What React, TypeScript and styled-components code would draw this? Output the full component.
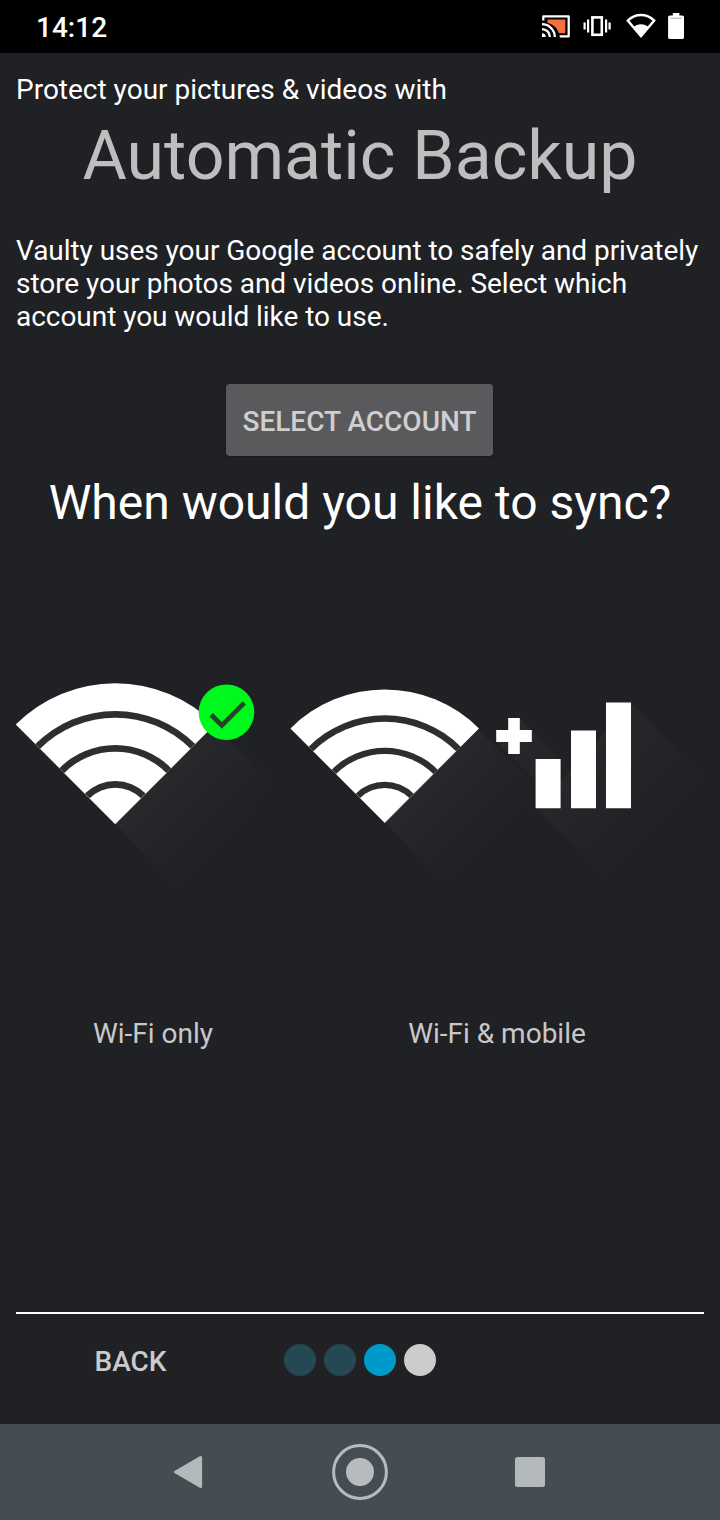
import React from "react";
import styled, { createGlobalStyle } from "styled-components";

const GlobalStyle = createGlobalStyle`
  *, *::before, *::after { box-sizing: border-box; }
  body { margin: 0; background: #202125; }
`;

const Screen = styled.div`
  width: 720px;
  height: 1520px;
  display: flex;
  flex-direction: column;
  overflow: hidden;
  background: #202125;
  color: #fff;
  font-family: Roboto, "Liberation Sans", sans-serif;
`;

const StatusBar = styled.header`
  height: 53px;
  flex: none;
  display: flex;
  align-items: center;
  justify-content: space-between;
  padding-left: 36px;
  background: #000;
`;

const Clock = styled.time`
  font-size: 28px;
  font-weight: 500;
  line-height: 34px;
  padding-top: 2px;
`;

const StatusIcons = styled.svg`
  width: 200px;
  height: 53px;
`;

const Content = styled.main`
  flex: 1;
  display: flex;
  flex-direction: column;
  padding: 20px 16px 0;
`;

const Intro = styled.p`
  margin: 0;
  font-size: 28px;
  line-height: 33px;
`;

const Title = styled.h1`
  margin: 8px 0 0;
  font-size: 68px;
  font-weight: 400;
  line-height: 84px;
  text-align: center;
  white-space: nowrap;
  color: #bebebe;
`;

const Description = styled.p`
  margin: 36px 0 0;
  font-size: 28px;
  line-height: 33px;
  letter-spacing: -0.045px;
  white-space: nowrap;
`;

const AccountButton = styled.button`
  align-self: center;
  width: 267px;
  height: 72px;
  margin: 51px 1px 0 0;
  padding: 3px 0 0;
  border: 0;
  border-radius: 4px;
  background: #5a5a5c;
  box-shadow: 0 1px 2px rgba(0, 0, 0, 0.3);
  color: #cfcfd1;
  font: 500 28px/33px Roboto, "Liberation Sans", sans-serif;
  white-space: nowrap;
`;

const Question = styled.h2`
  margin: 18px 0 0;
  font-size: 48px;
  font-weight: 400;
  line-height: 57px;
  text-align: center;
  white-space: nowrap;
`;

const Options = styled.div`
  display: grid;
  grid-template-columns: 274px 414px;
  margin-top: 139px;
`;

const Option = styled.button`
  display: flex;
  flex-direction: column;
  align-items: center;
  padding: 0;
  border: 0;
  background: none;
  color: #c8c8ca;
  font: 400 28px/33px Roboto, "Liberation Sans", sans-serif;
`;

const OptionArt = styled.svg`
  display: block;
  width: 100%;
  height: 230px;
  margin-bottom: 117px;
`;

const Footer = styled.footer`
  display: flex;
  align-items: center;
  height: 112px;
  margin-top: auto;
  padding-bottom: 19px;
  border-top: 2px solid #fff;
`;

const BackButton = styled.button`
  width: 229px;
  padding: 3px 0 0;
  border: 0;
  background: none;
  color: #cacacc;
  font: 500 28px/33px Roboto, "Liberation Sans", sans-serif;
`;

const Dots = styled.div`
  display: flex;
  gap: 8px;
  margin-left: 38.5px;
`;

const Dot = styled.span<{ $color: string }>`
  width: 32px;
  height: 32px;
  border-radius: 50%;
  background: ${(p) => p.$color};
`;

const NavBar = styled.nav`
  height: 96px;
  flex: none;
  display: flex;
  align-items: center;
  justify-content: center;
  gap: 114px;
  background: #454c52;
`;

const NavIcon = styled.svg`
  width: 56px;
  height: 56px;
`;

/* Quarter-circle sector that opens upwards from its apex. */
const sector = (cx: number, cy: number, r: number) => {
  const d = r * Math.SQRT1_2;
  return `M${cx} ${cy}L${cx - d} ${cy - d}A${r} ${r} 0 0 1 ${cx + d} ${cy - d}Z`;
};

function WifiFan({ cx, cy, radii }: { cx: number; cy: number; radii: number[] }) {
  return (
    <>
      {radii.map((r, i) => (
        <path key={r} d={sector(cx, cy, r)} fill={i % 2 ? "#2e2e2f" : "#fff"} />
      ))}
    </>
  );
}

function Shade({ id, x1, y1, x2, y2 }: { id: string; x1: number; y1: number; x2: number; y2: number }) {
  return (
    <linearGradient id={id} gradientUnits="userSpaceOnUse" x1={x1} y1={y1} x2={x2} y2={y2}>
      <stop offset="0" stopColor="#28292b" />
      <stop offset="1" stopColor="#28292b" stopOpacity="0" />
    </linearGradient>
  );
}

export default function App() {
  return (
    <>
      <GlobalStyle />
      <Screen>
        <StatusBar>
          <Clock>14:12</Clock>
          <StatusIcons viewBox="520 0 200 53" fill="none">
            <path d="M543.3 20.5v-4.2h25.4v20h-9" stroke="#fff" strokeWidth="2.3" strokeLinejoin="round" />
            <path d="M547.5 19.5h17.8v13.8h-6.4c-1.4-5.2-5.8-9.3-11.4-10.4z" fill="#f4713f" />
            <path d="M542 24.2a12.8 12.8 0 0 1 12.8 12.8M542 29.1a7.9 7.9 0 0 1 7.9 7.9" stroke="#fff" strokeWidth="2.3" />
            <path d="M542 33.2a3.8 3.8 0 0 1 3.8 3.8H542z" fill="#fff" />
            <rect x="592.4" y="17.4" width="9.4" height="17.4" stroke="#fff" strokeWidth="2.6" />
            <path d="M588.1 19.5v13M584.6 22.5v7M606.1 19.5v13M609.6 22.5v7" stroke="#fff" strokeWidth="2.2" />
            <path d="M627.8 20.6C635.5 13.2 646.5 13.2 654.2 20.6L641 36.2z" stroke="#fff" strokeWidth="2.4" />
            <path d="M633.2 27.2C637.5 23.2 644.5 23.2 648.8 27.2L641 37z" fill="#fff" />
            <path d="M672.8 13h6.6v2.4h3q1.6 0 1.6 1.6v20.4q0 1.6-1.6 1.6h-12.7q-1.6 0-1.6-1.6V17q0-1.6 1.6-1.6h3.1z" fill="#fff" />
            <path d="M670 18.2h12" stroke="#777" strokeWidth="0.6" />
          </StatusIcons>
        </StatusBar>

        <Content>
          <Intro>Protect your pictures &amp; videos with</Intro>
          <Title>Automatic Backup</Title>
          <Description>
            Vaulty uses your Google account to safely and privately
            <br />
            store your photos and videos online. Select which
            <br />
            account you would like to use.
          </Description>
          <AccountButton>SELECT ACCOUNT</AccountButton>
          <Question>When would you like to sync?</Question>

          <Options>
            <Option>
              <OptionArt viewBox="16 670 274 230">
                <defs>
                  <Shade id="fanShade" x1={160} y1={770} x2={225} y2={835} />
                </defs>
                <path d="M115.3 824L214 725L290 801V900H191z" fill="url(#fanShade)" />
                <WifiFan cx={115.3} cy={824} radii={[140.8, 113, 106.3, 79, 72.3, 43, 36.3]} />
                <circle cx="226.5" cy="712.2" r="27.8" fill="#00f91c" />
                <path d="M211.2 714.7L221.8 725.4L244.3 702.9" fill="none" stroke="#26422b" strokeWidth="4.8" />
              </OptionArt>
              Wi-Fi only
            </Option>
            <Option>
              <OptionArt viewBox="290 670 414 230">
                <defs>
                  <Shade id="dualShade" x1={425} y1={770} x2={490} y2={835} />
                  <Shade id="plusShade" x1={514} y1={736} x2={560} y2={782} />
                  <Shade id="barShade" x1={565} y1={740} x2={653} y2={828} />
                </defs>
                <path d="M384.7 822.7L478 729.4L570 821.4V900H462z" fill="url(#dualShade)" />
                <path d="M508 753L496.4 741.6L519.3 718.3L570 769V815z" fill="url(#plusShade)" />
                <path d="M536 808L630.8 703L704 776V900H628z" fill="url(#barShade)" />
                <WifiFan cx={384.7} cy={822.7} radii={[133.3, 107.5, 101, 75, 68.8, 41, 34.8]} />
                <path
                  d="M508.2 718h11.6v12.1h12v11.8h-12v12h-11.6v-12h-12v-11.8h12zM535.6 759h25v49.3h-25zM571 730.6h25v77.7h-25zM606 702.5h25v105.8h-25z"
                  fill="#fff"
                />
              </OptionArt>
              Wi-Fi &amp; mobile
            </Option>
          </Options>

          <Footer>
            <BackButton>BACK</BackButton>
            <Dots>
              <Dot $color="#264854" />
              <Dot $color="#264854" />
              <Dot $color="#0099cc" />
              <Dot $color="#cccccc" />
            </Dots>
          </Footer>
        </Content>

        <NavBar>
          <NavIcon viewBox="0 0 56 56">
            <path d="M13.6 28L38.6 13.5V42.5z" fill="#b4b9bb" stroke="#b4b9bb" strokeWidth="3" strokeLinejoin="round" />
          </NavIcon>
          <NavIcon viewBox="0 0 56 56">
            <circle cx="28" cy="28" r="26.4" fill="none" stroke="#b7bbbf" strokeWidth="3" />
            <circle cx="28" cy="28" r="14" fill="#b7bbbd" />
          </NavIcon>
          <NavIcon viewBox="0 0 56 56">
            <rect x="13" y="13" width="30" height="30" rx="2.5" fill="#b4b9bb" />
          </NavIcon>
        </NavBar>
      </Screen>
    </>
  );
}
